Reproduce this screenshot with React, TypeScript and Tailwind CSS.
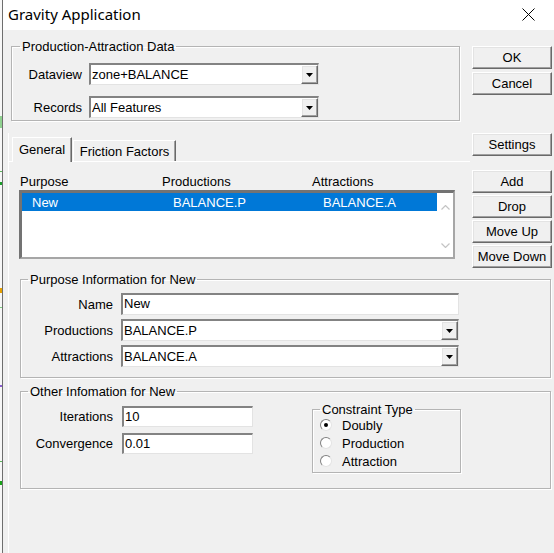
import type { ReactNode } from "react";

const raised =
  "border border-t-white border-l-white border-r-[#696969] border-b-[#696969] shadow-[inset_-1px_-1px_0_#a0a0a0,inset_1px_1px_0_#e3e3e3]";
const sunken =
  "bg-white border-t-2 border-l-2 border-r border-b border-t-[#838383] border-l-[#838383] border-r-[#e3e3e3] border-b-[#e3e3e3]";

function Btn({ children, className = "" }: { children: ReactNode; className?: string }) {
  return (
    <div
      className={`${raised} bg-[#f0f0f0] h-[23px] w-[80px] flex items-center justify-center text-[13px] leading-none ${className}`}
    >
      {children}
    </div>
  );
}

function DropArrow() {
  return (
    <div className={`${raised} bg-[#f0f0f0] w-[17px] h-full flex items-center justify-center shrink-0`}>
      <svg width="7" height="4" viewBox="0 0 7 4">
        <path d="M0 0h7L3.5 4z" fill="#000" />
      </svg>
    </div>
  );
}

function Combo({ value, className }: { value: string; className: string }) {
  return (
    <div className={`${sunken} h-[22px] flex items-stretch ${className}`}>
      <span className="flex-1 pl-[1px] leading-[19px] whitespace-nowrap overflow-hidden">{value}</span>
      <DropArrow />
    </div>
  );
}

function Field({ value, className }: { value: string; className: string }) {
  return (
    <div className={`${sunken} pl-[1px] leading-[18px] whitespace-nowrap ${className}`}>{value}</div>
  );
}

function Group({
  title,
  className,
  legendClass,
  children,
}: {
  title: string;
  className: string;
  legendClass: string;
  children: ReactNode;
}) {
  return (
    <fieldset
      className={`border border-[#b4b4b4] shadow-[inset_1px_1px_0_#ffffff,1px_1px_0_#ffffff] shrink-0 ${className}`}
    >
      <legend className={`px-[2px] text-[13px] leading-[15px] ${legendClass}`}>{title}</legend>
      {children}
    </fieldset>
  );
}

function Radio({ checked, label }: { checked?: boolean; label: string }) {
  return (
    <div className="h-[18px] flex items-center gap-[10px]">
      <div className="w-[12px] h-[12px] rounded-full bg-white border border-t-[#808080] border-l-[#808080] border-r-[#e3e3e3] border-b-[#e3e3e3] flex items-center justify-center">
        {checked && <div className="w-[4px] h-[4px] rounded-full bg-black" />}
      </div>
      <span>{label}</span>
    </div>
  );
}

function Chevron({ up }: { up?: boolean }) {
  return (
    <svg width="9" height="5" viewBox="0 0 9 5">
      <path
        d={up ? "M0.5 4.5L4.5 0.5L8.5 4.5" : "M0.5 0.5L4.5 4.5L8.5 0.5"}
        fill="none"
        stroke="#c4c4c4"
        strokeWidth="1.2"
      />
    </svg>
  );
}

export default function App() {
  return (
    <div className="w-[554px] h-[553px] flex overflow-hidden bg-[#f0f0f0] text-black font-['Liberation_Sans',Arial,sans-serif]">
      {/* bits of the window behind */}
      <div className="w-[2px] relative bg-[#f7f7f7] shrink-0">
        <div className="absolute left-0 top-[116px] w-[2px] h-[12px] bg-[#8fd18f]" />
        <div className="absolute left-0 top-[171px] w-[2px] h-[1px] bg-[#5cb85c]" />
        <div className="absolute left-0 top-[182px] w-[2px] h-[3px] bg-[#1a9e2a]" />
        <div className="absolute left-0 top-[288px] w-[2px] h-[5px] bg-[#e6a000]" />
        <div className="absolute left-0 top-[307px] w-[2px] h-[1px] bg-[#7ccf7c]" />
        <div className="absolute left-0 top-[385px] w-[2px] h-[2px] bg-[#8a5cd0]" />
        <div className="absolute left-0 top-[461px] w-[2px] h-[1px] bg-[#5cb85c]" />
        <div className="absolute left-0 top-[481px] w-[2px] h-[4px] bg-[#1aa31a]" />
      </div>
      <div className="w-[1px] bg-[#6e6e6e] shrink-0" />

      <div className="flex-1 flex flex-col min-w-0">
        {/* title bar */}
        <div className="h-[30px] bg-white flex items-center justify-between pl-[5px] pr-[19px] pb-[2px] shrink-0">
          <span className="font-['Noto_Sans',sans-serif] text-[15px]">Gravity Application</span>
          <svg width="13" height="13" viewBox="0 0 13 13">
            <path d="M0.5 0.5L12.5 12.5M12.5 0.5L0.5 12.5" stroke="#000" strokeWidth="1" />
          </svg>
        </div>

        {/* body */}
        <div className="flex-1 flex flex-col text-[13px] leading-[15px]">
          {/* Production-Attraction Data + OK/Cancel */}
          <div className="mt-[9px] flex">
            <Group title="Production-Attraction Data" className="ml-[8px] w-[449px] h-[82px]" legendClass="ml-[8px]">
              <div className="pt-[9px] flex flex-col gap-[11px]">
                <div className="flex items-center">
                  <span className="w-[70px] text-right mr-[7px]">Dataview</span>
                  <Combo value="zone+BALANCE" className="w-[230px]" />
                </div>
                <div className="flex items-center">
                  <span className="w-[70px] text-right mr-[7px]">Records</span>
                  <Combo value="All Features" className="w-[230px]" />
                </div>
              </div>
            </Group>
            <div className="ml-[12px] mt-[7px] flex flex-col gap-[3px]">
              <Btn>OK</Btn>
              <Btn>Cancel</Btn>
            </div>
          </div>

          {/* tab control area */}
          <div className="mt-[12px] ml-[5px] border-l border-white flex-1 flex flex-col">
            <div className="flex">
              <div className="w-[461px] flex flex-col">
                <div className="mt-[4px] h-[24px] flex items-end pl-[3px]">
                  <div className="relative z-10 h-[25px] w-[60px] -mb-[1px] bg-[#f0f0f0] border-t border-l border-white border-r border-r-[#696969] shadow-[inset_-1px_0_0_#a0a0a0] flex justify-center pt-[4px]">
                    General
                  </div>
                  <div className="h-[21px] w-[103px] ml-[1px] bg-[#f0f0f0] border-t border-l border-white border-r border-r-[#696969] shadow-[inset_-1px_0_0_#a0a0a0] flex justify-center pt-[3px]">
                    Friction Factors
                  </div>
                </div>
                <div className="border-t border-white">
                  <div className="mt-[12px] flex pl-[11px] whitespace-nowrap">
                    <span className="w-[142px]">Purpose</span>
                    <span className="w-[150px]">Productions</span>
                    <span>Attractions</span>
                  </div>
                  <div className="mt-[1px] ml-[10px] w-[436px] h-[69px] bg-white border-t-[3px] border-l-[3px] border-r-2 border-b-2 border-t-[#737373] border-l-[#737373] border-r-[#a6a6a6] border-b-[#a6a6a6] flex">
                    <div className="w-[415px]">
                      <div className="h-[18px] bg-[#0078d7] text-white flex items-center pl-[10px] whitespace-nowrap">
                        <span className="w-[141px]">New</span>
                        <span className="w-[150px]">BALANCE.P</span>
                        <span>BALANCE.A</span>
                      </div>
                    </div>
                    <div className="flex-1 flex flex-col items-center justify-between pt-[12px] pb-[9px]">
                      <Chevron up />
                      <Chevron />
                    </div>
                  </div>
                </div>
              </div>
              <div className="ml-[2px] w-[80px] flex flex-col">
                <Btn>Settings</Btn>
                <div className="mt-[14px] flex flex-col gap-[2px]">
                  <Btn>Add</Btn>
                  <Btn>Drop</Btn>
                  <Btn>Move Up</Btn>
                  <Btn>Move Down</Btn>
                </div>
              </div>
            </div>

            {/* Purpose Information */}
            <Group
              title="Purpose Information for New"
              className="mt-[4px] ml-[11px] w-[531px] h-[106px]"
              legendClass="ml-[7px]"
            >
              <div className="pt-[6px] flex flex-col gap-[4px]">
                <div className="flex items-center">
                  <span className="w-[92px] text-right mr-[8px]">Name</span>
                  <Field value="New" className="w-[338px] h-[22px]" />
                </div>
                <div className="flex items-center">
                  <span className="w-[92px] text-right mr-[8px]">Productions</span>
                  <Combo value="BALANCE.P" className="w-[338px]" />
                </div>
                <div className="flex items-center">
                  <span className="w-[92px] text-right mr-[8px]">Attractions</span>
                  <Combo value="BALANCE.A" className="w-[338px]" />
                </div>
              </div>
            </Group>

            {/* Other Information */}
            <Group
              title="Other Infomation for New"
              className="mt-[6px] ml-[11px] w-[531px] h-[105px]"
              legendClass="ml-[7px]"
            >
              <div className="flex items-start">
                <div className="pt-[7px] flex flex-col gap-[6px]">
                  <div className="flex items-center">
                    <span className="w-[92px] text-right mr-[9px]">Iterations</span>
                    <Field value="10" className="w-[131px] h-[21px]" />
                  </div>
                  <div className="flex items-center">
                    <span className="w-[92px] text-right mr-[9px]">Convergence</span>
                    <Field value="0.01" className="w-[131px] h-[21px]" />
                  </div>
                </div>
                <Group title="Constraint Type" className="ml-[59px] mt-[3px] w-[149px] h-[71px]" legendClass="ml-[7px]">
                  <div className="pl-[7px] -mt-[1px] flex flex-col">
                    <Radio checked label="Doubly" />
                    <Radio label="Production" />
                    <Radio label="Attraction" />
                  </div>
                </Group>
              </div>
            </Group>
          </div>
        </div>
      </div>
    </div>
  );
}
